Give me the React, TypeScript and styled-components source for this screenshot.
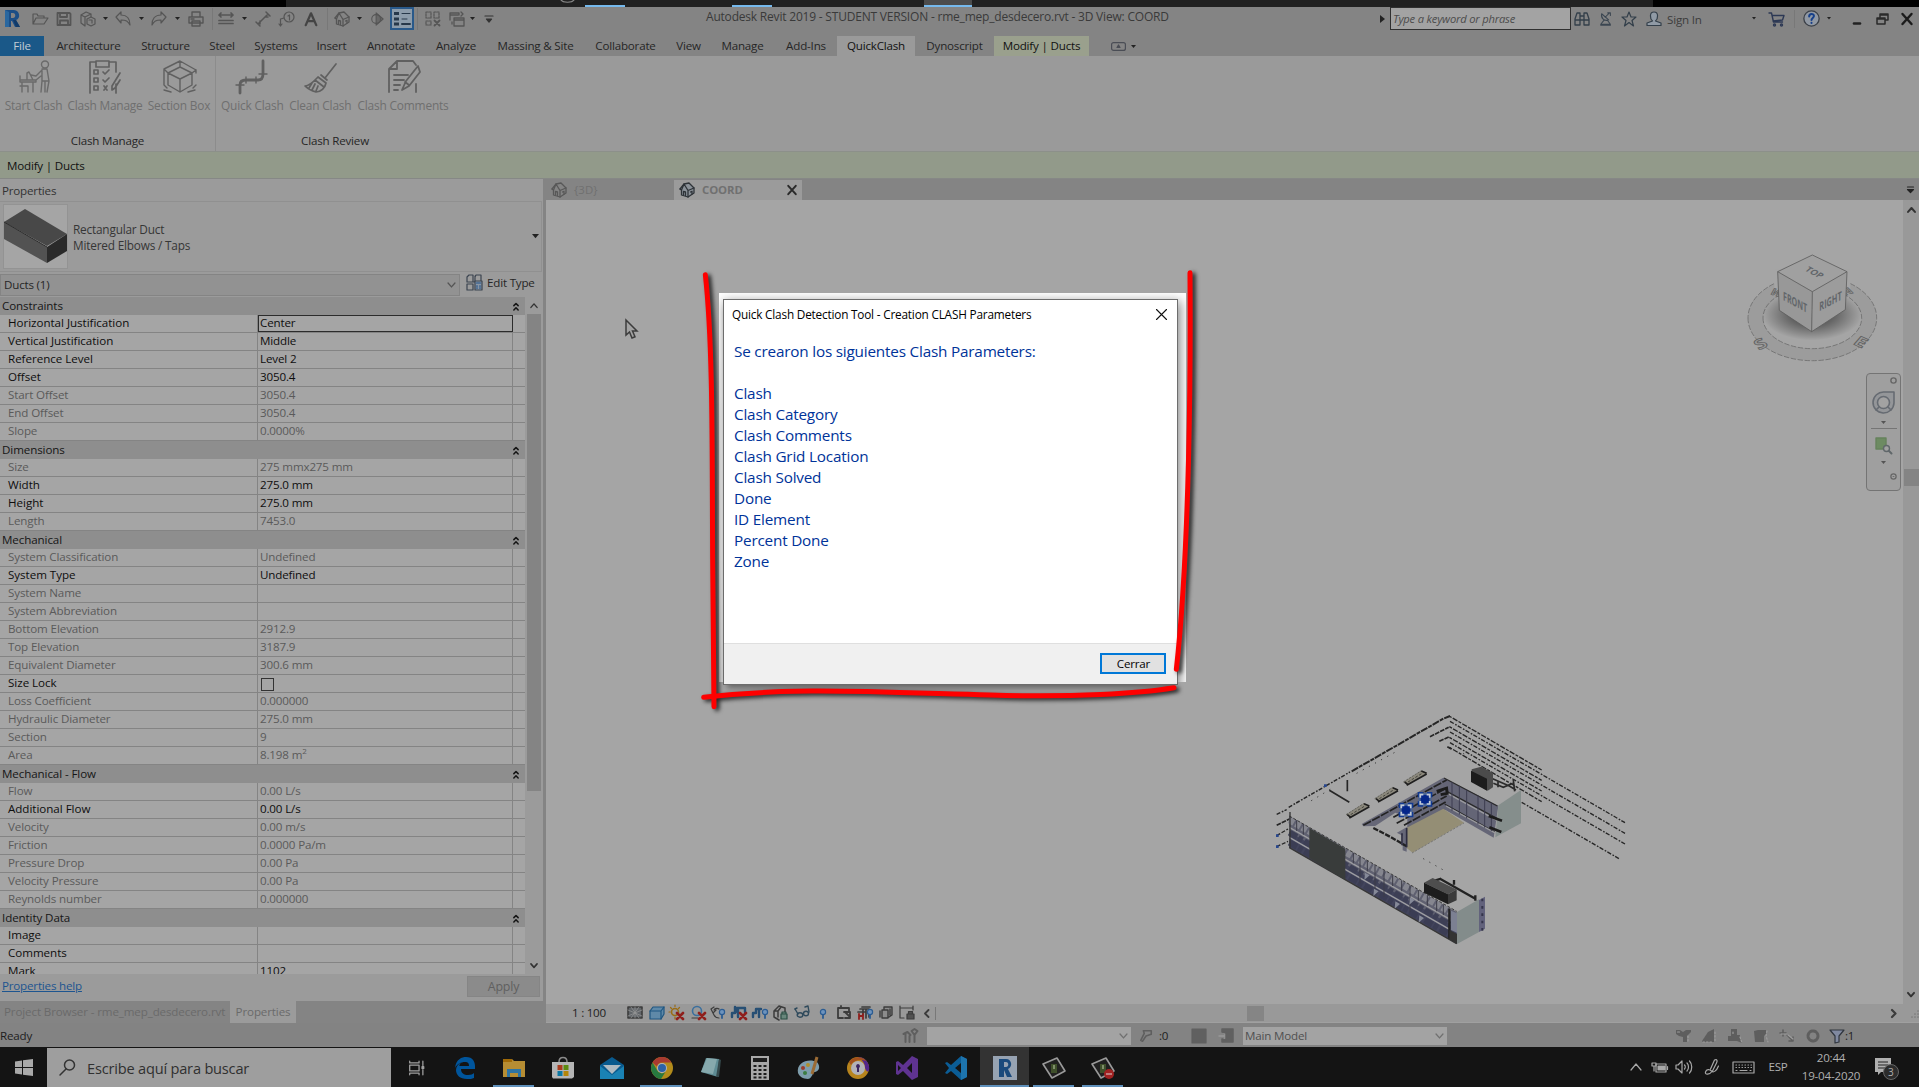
import React from 'react';
import styled, { createGlobalStyle, css } from 'styled-components';

const Global = createGlobalStyle`
  * { box-sizing: border-box; }
  html, body { margin: 0; padding: 0; background: #000; }
  body { overflow: hidden; font-family: "Open Sans", "Noto Sans", sans-serif; }
  svg { display: block; flex: none; overflow: visible; }
`;

const ink = '#3c3c3c';

/* ---------- shell ---------- */
const Screen = styled.div`
  position: relative;
  width: 1919px;
  height: 1087px;
  display: flex;
  flex-direction: column;
  font-size: 11.6px;
  letter-spacing: -0.19px;
  line-height: 16px;
  color: #262626;
  background: #848484;
  overflow: hidden;
  white-space: nowrap;
`;
const TopStrip = styled.div`
  height: 7px;
  flex: none;
  display: flex;
  background: #000;
`;
const StripPart = styled.div<{ $w: number; $bg?: string }>`
  width: ${p => p.$w}px;
  height: 7px;
  background: ${p => p.$bg || 'transparent'};
`;
const StripMark = styled.div<{ $w: number; $lit?: boolean }>`
  width: ${p => p.$w}px;
  height: 7px;
  background: ${p => (p.$lit ? '#4c4c4c' : '#212121')};
  border-bottom: 2px solid #76b9ed;
`;

/* ---------- title bar ---------- */
const TitleBar = styled.div`
  height: 29px;
  flex: none;
  display: flex;
  align-items: center;
  padding: 0 6px 6px 4px;
`;
const Slot = styled.div<{ $ml?: number; $w: number }>`
  width: ${p => p.$w}px;
  margin-left: ${p => p.$ml || 0}px;
  flex: none;
  display: flex;
  align-items: center;
  justify-content: center;
`;
const Sep = styled.div<{ $ml?: number; $h?: number }>`
  width: 1px;
  height: ${p => p.$h || 22}px;
  margin-left: ${p => p.$ml || 0}px;
  background: #787878;
`;
const ThinLines = styled.div`
  width: 24px;
  height: 23px;
  margin-left: 6px;
  display: flex;
  align-items: center;
  justify-content: center;
  background: #8c9cab;
  border: 2px solid #29598a;
`;
const WindowTitle = styled.div`
  margin-left: 213px;
  width: 470px;
  font-size: 12px;
  letter-spacing: -0.2px;
  color: #3a3a3a;
  margin-top: -4px;
`;
const RightTools = styled.div`
  margin-left: auto;
  display: flex;
  align-items: center;
`;
const SearchField = styled.div`
  width: 181px;
  height: 23px;
  margin-left: 5px;
  padding: 0 2px;
  display: flex;
  align-items: center;
  background: #a3a3a3;
  border: 1.5px solid #303030;
  font-style: italic;
  font-size: 11.2px;
  letter-spacing: -0.2px;
  color: #4c4c4c;
`;
const SignIn = styled.div`
  width: 36px;
  margin-left: 5px;
  margin-top: 2px;
  color: #3c3c3c;
`;

/* ---------- ribbon ---------- */
const Tabs = styled.div`
  height: 20px;
  flex: none;
  display: flex;
`;
const Tab = styled.div<{ $w: number; $kind?: 'file' | 'active' | 'context'; $ml?: number }>`
  width: ${p => p.$w}px;
  margin-left: ${p => p.$ml || 0}px;
  display: flex;
  align-items: center;
  justify-content: center;
  color: #262626;
  ${p => p.$kind === 'file' && css`background: #1a5888; color: #c3ccd4;`}
  ${p => p.$kind === 'active' && css`background: #9a9a9a; color: #111;`}
  ${p => p.$kind === 'context' && css`background: #9aa08d; color: #111;`}
`;
const Ribbon = styled.div`
  height: 95px;
  flex: none;
  display: flex;
  background: #9a9a9a;
`;
const RibbonPanel = styled.div<{ $w: number; $line?: boolean }>`
  width: ${p => p.$w}px;
  display: flex;
  flex-direction: column;
  justify-content: space-between;
  padding: 4px 5px 2px;
  ${p => p.$line && css`border-right: 1px solid #8c8c8c;`}
`;
const Commands = styled.div`
  display: flex;
  justify-content: flex-start;
`;
const Command = styled.div<{ $w: number }>`
  width: ${p => p.$w}px;
  display: flex;
  flex-direction: column;
  align-items: center;
  gap: 4px;
  color: #6f6f6f;
  font-size: 11.9px;
`;
const PanelTitle = styled.div`
  text-align: center;
  color: #262626;
`;
const ContextBar = styled.div`
  height: 28px;
  flex: none;
  display: flex;
  align-items: center;
  padding: 1px 7px 0;
  background: #929a8a;
  border-top: 1px solid #8c908a;
  border-bottom: 1px solid #868886;
  color: #111;
`;

/* ---------- main split ---------- */
const Main = styled.div`
  height: 844px;
  flex: none;
  display: flex;
`;
const Side = styled.div`
  width: 543px;
  display: flex;
  flex-direction: column;
`;
const SideBody = styled.div`
  height: 822px;
  background: #9b9b9b;
  display: flex;
  flex-direction: column;
`;
const SideTitle = styled.div`
  height: 22px;
  padding: 4px 2px 2px;
  color: #333;
`;
const TypeSelector = styled.div`
  height: 71px;
  width: 542px;
  display: flex;
  align-items: center;
  padding: 0 2px 0 3px;
  border: 1px solid #909090;
  border-left: 0;
`;
const Thumb = styled.div`
  width: 65px;
  height: 65px;
  background: #a5a5a5;
  border: 1px solid #939393;
`;
const TypeNames = styled.div`
  margin-left: 5px;
  padding-top: 1px;
  flex: 1;
  font-size: 11.8px;
  line-height: 16px;
  color: #363636;
`;
const FilterRow = styled.div`
  height: 25px;
  display: flex;
  align-items: center;
`;
const FilterCombo = styled.div`
  width: 460px;
  height: 22px;
  padding: 0 3px;
  display: flex;
  align-items: center;
  justify-content: space-between;
  background: #929292;
  border: 1px solid #848484;
`;
const EditType = styled.div`
  display: flex;
  align-items: center;
  gap: 4px;
  padding-left: 6px;
  padding-bottom: 4px;
`;
const GridArea = styled.div`
  height: 677px;
  display: flex;
`;
const PropGrid = styled.div`
  width: 525px;
  height: 677px;
  overflow: hidden;
`;
const Group = styled.div`
  height: 18px;
  display: flex;
  align-items: center;
  justify-content: space-between;
  padding: 0 6px 0 2px;
  background: #8e8e8e;
  color: #161616;
  letter-spacing: -0.1px;
`;
const PropRow = styled.div<{ $dim?: boolean }>`
  height: 18px;
  display: grid;
  grid-template-columns: 258px 255px 12px;
  background: #a5a5a5;
  border-bottom: 1px solid #848484;
  color: ${p => (p.$dim ? '#5a5a5a' : '#0e0e0e')};
  letter-spacing: ${p => (p.$dim ? '-0.12px' : '-0.03px')};
`;
const PropName = styled.div`
  padding-left: 8px;
  line-height: 16px;
  border-right: 1px solid #848484;
`;
const PropValue = styled.div<{ $focus?: boolean }>`
  padding-left: 2px;
  line-height: 16px;
  letter-spacing: -0.15px;
  border-right: 1px solid #848484;
  sup { font-size: 8px; line-height: 0; vertical-align: 5px; }
  ${p => p.$focus && css`outline: 1.5px solid #2c2c2c; outline-offset: -1px;`}
`;
const CheckBox = styled.div`
  width: 13px;
  height: 13px;
  margin: 3px 0 0 1px;
  border: 1px solid #333;
`;
const SideScroll = styled.div`
  width: 16px;
  margin-left: 1px;
  display: flex;
  flex-direction: column;
  align-items: center;
`;
const SideScrollThumb = styled.div`
  width: 14px;
  height: 477px;
  background: #848484;
`;
const ArrowBox = styled.div<{ $h: number; $mt?: number }>`
  height: ${p => p.$h}px;
  margin-top: ${p => p.$mt || 0}px;
  display: flex;
  align-items: center;
  justify-content: center;
`;
const SideFooter = styled.div`
  height: 27px;
  display: flex;
  justify-content: space-between;
  padding: 2px 3px 0 2px;
`;
const HelpLink = styled.div`
  margin-top: 2px;
  color: #1d5590;
  text-decoration: underline;
`;
const ApplyButton = styled.div`
  width: 73px;
  height: 21px;
  display: flex;
  align-items: center;
  justify-content: center;
  background: #8b8b8b;
  border: 1px solid #858585;
  color: #606060;
  font-size: 12.4px;
`;
const SideTabs = styled.div`
  height: 22px;
  display: flex;
`;
const SideTab = styled.div<{ $w: number; $active?: boolean }>`
  width: ${p => p.$w}px;
  display: flex;
  align-items: center;
  justify-content: ${p => (p.$active ? 'center' : 'flex-start')};
  padding-left: ${p => (p.$active ? 0 : 4)}px;
  letter-spacing: -0.13px;
  color: #6a6a6a;
  background: ${p => (p.$active ? '#9b9b9b' : 'transparent')};
`;

/* ---------- view ---------- */
const View = styled.div`
  flex: 1;
  margin-left: 3px;
  display: flex;
  flex-direction: column;
`;
const ViewTabs = styled.div`
  height: 21px;
  display: flex;
  padding-top: 1px;
`;
const ViewTab = styled.div<{ $w: number; $active?: boolean }>`
  width: ${p => p.$w}px;
  display: flex;
  align-items: center;
  padding-left: 5px;
  color: #707070;
  font-size: 11.4px;
  background: ${p => (p.$active ? '#9b9b9b' : 'transparent')};
  span { margin-left: 7px; flex: 1; font-weight: ${p => (p.$active ? 700 : 400)}; letter-spacing: ${p => (p.$active ? -0.1 : 0.1)}px; }
  svg:last-child { margin-right: ${p => (p.$active ? 5 : 0)}px; }
`;
const TabMenu = styled.div`
  margin-left: auto;
  width: 17px;
  display: flex;
  align-items: center;
  justify-content: center;
`;
const ViewBody = styled.div`
  height: 804px;
  display: flex;
`;
const Canvas = styled.div`
  position: relative;
  flex: 1;
  background: #a5a5a5;
`;
const Placed = styled.div<{ $x: number; $y: number }>`
  position: absolute;
  left: ${p => p.$x}px;
  top: ${p => p.$y}px;
`;
const NavBar = styled.div`
  position: absolute;
  right: 2px;
  top: 173px;
  width: 35px;
  height: 118px;
  padding: 3px;
  display: flex;
  flex-direction: column;
  align-items: center;
  background: #9f9f9f;
  border: 1.5px solid #747474;
  border-radius: 4px;
`;
const NavLine = styled.div`
  width: 26px;
  height: 1px;
  background: #757575;
`;
const VScroll = styled.div`
  width: 16px;
  display: flex;
  flex-direction: column;
  align-items: center;
  background: #999;
`;
const VThumb = styled.div`
  width: 15px;
  height: 17px;
  margin-top: 250px;
  background: #848484;
`;
const ViewControls = styled.div`
  height: 19px;
  display: flex;
  align-items: center;
  background: #999;
  border-bottom: 1px solid #a0a0a0;
  color: #222;
`;
const Scale = styled.div`
  width: 78px;
  padding-left: 26px;
  letter-spacing: -0.25px;
`;
const HThumb = styled.div`
  width: 17px;
  height: 15px;
  margin-left: 311px;
  background: #858585;
`;

/* ---------- status bar ---------- */
const StatusBar = styled.div`
  height: 24px;
  flex: none;
  display: flex;
  align-items: center;
  padding-top: 1px;
  background: #838383;
  color: #1e1e1e;
`;
const Combo = styled.div<{ $w: number; $ml: number }>`
  width: ${p => p.$w}px;
  height: 18px;
  margin-left: ${p => p.$ml}px;
  padding: 0 3px 0 2px;
  display: flex;
  align-items: center;
  justify-content: space-between;
  background: #a3a3a3;
  color: #505050;
`;
const StatusText = styled.div<{ $w: number; $ml?: number }>`
  width: ${p => p.$w}px;
  margin-left: ${p => p.$ml || 0}px;
`;

/* ---------- taskbar ---------- */
const Taskbar = styled.div`
  height: 40px;
  flex: none;
  display: flex;
  background: #141414;
`;
const StartButton = styled.div`
  width: 47px;
  display: flex;
  align-items: center;
  justify-content: center;
`;
const TaskSearch = styled.div`
  width: 344px;
  height: 39px;
  margin-top: 1px;
  padding-left: 12px;
  display: flex;
  align-items: center;
  gap: 11px;
  background: #9e9e9e;
  color: #303030;
  font-size: 14.6px;
  letter-spacing: -0.2px;
`;
const TaskItem = styled.div<{ $run?: boolean; $active?: boolean }>`
  width: 49.1px;
  height: 40px;
  padding: 2px 0 0 1px;
  position: relative;
  display: flex;
  align-items: center;
  justify-content: center;
  background: ${p => (p.$active ? '#333' : 'transparent')};
  ${p => p.$run && css`
    &::after {
      content: '';
      position: absolute;
      left: ${p.$active ? 0 : 4}px;
      right: ${p.$active ? 0 : 4}px;
      bottom: 0;
      height: 2px;
      background: #5f90bb;
    }
  `}
`;
const Tray = styled.div`
  margin-left: auto;
  display: flex;
  align-items: center;
  padding-right: 20px;
  color: #b0b0b0;
`;
const TrayText = styled.div<{ $w: number; $ml: number }>`
  width: ${p => p.$w}px;
  margin-left: ${p => p.$ml}px;
  text-align: center;
  line-height: 18px;
`;

/* ---------- dialog ---------- */
const Halo = styled.div`
  position: absolute;
  left: 719px;
  top: 293px;
  width: 467px;
  height: 389px;
  background: #fff;
  overflow: hidden;
`;
const HaloShade = styled.div`
  position: absolute;
  left: 4px;
  top: 6px;
  width: 455px;
  height: 386px;
  box-shadow: 2px 3px 10px 1px rgba(0, 0, 0, 0.42);
`;
const Dialog = styled.div`
  position: absolute;
  left: 723px;
  top: 299px;
  width: 455px;
  height: 386px;
  display: flex;
  flex-direction: column;
  background: #fff;
  border: 1px solid #6d6d6d;
  box-shadow: 0 7px 6px -4px rgba(0, 0, 0, 0.4);
`;
const DialogTitle = styled.div`
  height: 30px;
  padding: 0 10px 2px 8px;
  display: flex;
  align-items: center;
  justify-content: space-between;
  color: #000;
  font-size: 11.8px;
  letter-spacing: -0.2px;
`;
const DialogBody = styled.div`
  flex: 1;
  padding: 11px 10px;
  font-size: 15.3px;
  letter-spacing: -0.2px;
  line-height: 21px;
  color: #003399;
`;
const BodyLine = styled.div`
  height: 21px;
`;
const DialogFooter = styled.div`
  height: 41px;
  padding: 9px 11px 0 0;
  display: flex;
  justify-content: flex-end;
  background: #f0f0f0;
  border-top: 1px solid #dfdfdf;
`;
const CloseButton = styled.div`
  width: 66px;
  height: 21px;
  padding-left: 1px;
  display: flex;
  align-items: center;
  justify-content: center;
  background: #e1e1e1;
  border: 2px solid #0078d7;
  color: #000;
`;
const Marker = styled.svg`
  position: absolute;
  left: 690px;
  top: 260px;
  filter: drop-shadow(3px 2px 2px rgba(0, 0, 0, 0.8));
`;

/* ---------- icons ---------- */
type IcoProps = { w?: number; h?: number; vb?: string; c?: string; sw?: number; children: React.ReactNode };
const Ico = ({ w = 16, h = 16, vb = '0 0 16 16', c = ink, sw = 1.2, children }: IcoProps) => (
  <svg width={w} height={h} viewBox={vb} fill="none" stroke={c} strokeWidth={sw} strokeLinejoin="round" strokeLinecap="round">
    {children}
  </svg>
);
const Down = ({ w = 5, c = '#222' }: { w?: number; c?: string }) => (
  <svg width={w} height={w * 0.6} viewBox="0 0 10 6"><path d="M0 0h10L5 6z" fill={c} /></svg>
);
const Chevron = ({ up = false, c = '#333', sw = 1.3, w = 9 }) => (
  <Ico w={w} h={w * 0.66} vb="0 0 9 6" c={c} sw={sw}><path d={up ? 'M1 5l3.5-4L8 5' : 'M1 1l3.5 4L8 1'} /></Ico>
);
const Collapse = () => (
  <Ico w={6} h={9} vb="0 0 7 10" c="#151515" sw={1.8}><path d="M1 4l2.5-2.500L6 4M1 9l2.500-2.500L6 9" /></Ico>
);
const Cross = ({ w = 12, sw = 2.4, c = '#2a2a2a' }) => (
  <Ico w={w} h={w} vb="0 0 12 12" sw={sw} c={c}><path d="M1.5 1l9 10M10.5 1l-9 10" /></Ico>
);
const House = ({ c = ink, fill = 'none' }) => (
  <Ico c={c} sw={1.3}>
    <path d="M1 7l4-5 5-1 5 5v5l-6 4-6.500-2V8z" fill={fill} />
    <path d="M5 2l4 6.500L15 6M5 2L2.500 8l-1.500-1M9 8.500V15M4.500 13V9.500l2 .5v3.500M11.500 10l1.500-.7V12" />
  </Ico>
);
const RevitR = ({ w = 17, h = 19 }) => (
  <svg width={w} height={h} viewBox="0 0 17 19">
    <path fillRule="evenodd" d="M1 1h9c6 0 7 9 2 10l4 7h-5L8 12H7v6H1zM7 4v5h2c3 0 3-5 0-5z" fill="#1c4e86" />
    <path d="M1 1l4 2v15H1z" fill="#2a679f" /><path d="M9 11l3 0 4 7h-4z" fill="#123a68" />
  </svg>
);
const G = '#555';

const QuickAccess = () => (
  <>
    <Slot $w={16}><RevitR /></Slot>
    <Slot $ml={11} $w={18}><Ico w={18} c={G}><path d="M1 13V3h4l1 2h6v2M1 13l3-6h12l-4 6z" /></Ico></Slot>
    <Slot $ml={7} $w={16}><Ico c={G} sw={1.8}><path d="M1.500 2h12l1 1v11h-13zM4 2v4h7V2M4 14V9.500h8V14" /></Ico></Slot>
    <Slot $ml={8} $w={16}><Ico c={G}><path d="M1 4l5-3 5 2v3M1 4v8l4 3M1 4l4 2v9M5 6l6-3" /><path d="M7 8l4-2 4 2v5l-4 2-4-2zM9 9h3v3" /></Ico></Slot>
    <Slot $ml={5} $w={8}><Down /></Slot>
    <Slot $ml={6} $w={16}><Ico c={G}><path d="M1 6l5-5v3c6 0 9 4 9 10-2-4-4-5-9-5v3z" /></Ico></Slot>
    <Slot $ml={6} $w={8}><Down /></Slot>
    <Slot $ml={6} $w={16}><Ico c={G}><path d="M15 6l-5-5v3c-6 0-9 4-9 10 2-4 4-5 9-5v3z" /></Ico></Slot>
    <Slot $ml={6} $w={8}><Down /></Slot>
    <Slot $ml={6} $w={18}><Ico w={18} c={G} sw={1.400}><path d="M4 6V1h8v5M1 6h14v6H1zM4 10h8v5H4zM3 8h3" /></Ico></Slot>
    <Sep $ml={7} />
    <Slot $ml={4} $w={18}><Ico w={18} c={G} sw={1.700}><path d="M1 4h14M3 2L1 4l2 2M13 2l2 2-2 2M1 9.500h14M1 12.500h14" /></Ico></Slot>
    <Slot $ml={5} $w={8}><Down /></Slot>
    <Slot $ml={7} $w={16}><Ico c={G} sw={1.5}><path d="M3 13L13 3M1 11l4 4M11 1l4 4M5 13v-3M11 6h2" /></Ico></Slot>
    <Slot $ml={8} $w={16}><Ico c={G}><circle cx="10" cy="6" r="5" /><path d="M9 5l1.500-1v5M5 7L1.500 8v6M0 13l1.500 2L3 13" /></Ico></Slot>
    <Slot $ml={9} $w={14}><Ico w={14} c="#444" sw={2.600}><path d="M2 15L8 1.500 14 15M4.500 10.500h7" /></Ico></Slot>
    <Sep $ml={9} />
    <Slot $ml={6} $w={16}><House c={G} /></Slot>
    <Slot $ml={5} $w={8}><Down /></Slot>
    <Slot $ml={7} $w={14}><Ico w={14} c={G}><circle cx="7" cy="8" r="5" /><path d="M7 1l8 7-8 7z" fill={G} fillOpacity=".6" /></Ico></Slot>
    <ThinLines>
      <Ico w={18} h={16} vb="0 0 18 16" c="#27384a" sw={1}>
        <path d="M1 2.500h5M1 8h5M1 13h5" strokeWidth="3" strokeLinecap="butt" /><path d="M9 2.500h8M9 8h5" /><path d="M9 13h8" strokeWidth="2" />
      </Ico>
    </ThinLines>
    <Sep $ml={3} />
    <Slot $ml={7} $w={16}><Ico c={G}><path d="M1 1h5v6H1zM9 1h5v6H9zM1 10h5v4H1z" strokeDasharray="2 1" /><path d="M9.500 9.500l5 5M14.500 9.500l-5 5" strokeWidth="1.800" /></Ico></Slot>
    <Slot $ml={7} $w={18}><Ico w={18} c={G} sw={1.300}><path d="M1 9V2h9v2M1 4h8M5 7h10v8H5zM5 9h10M12 1l2 2-2 2M3 11v2" /></Ico></Slot>
    <Slot $ml={2} $w={8}><Down /></Slot>
    <Slot $ml={8} $w={9}><Ico w={8} h={8} vb="0 0 8 8" c="#333"><path d="M0 1h8" /><path d="M1.500 4h5L4 7z" fill="#333" /></Ico></Slot>
  </>
);

const RightBar = () => (
  <RightTools>
    <svg width="5" height="8" viewBox="0 0 5 8"><path d="M0 0l5 4-5 4z" fill="#222" /></svg>
    <SearchField>Type a keyword or phrase</SearchField>
    <Slot $ml={3} $w={16}><Ico c="#333f4a" sw={1.300}><path d="M1 8l2-6h3v12H1zM15 8l-2-6h-3v12h5zM6 5h4M6 9h4M1 9h5M10 9h5" /></Ico></Slot>
    <Slot $ml={9} $w={14}><Ico w={14} c="#3b4651"><path d="M3 2c-1 5 3 9 8 7zM7 6l5-5M10 1h3v3M6 9l-4 5h11l-3-4M2 15h11" /></Ico></Slot>
    <Slot $ml={8} $w={16}><Ico c="#333f4a"><path d="M8 1l2 5h5l-4 3.500 1.500 5.500L8 11.500 3.500 15 5 9.500 1 6h5z" /></Ico></Slot>
    <Slot $ml={9} $w={16}><Ico c="#333f4a"><path d="M8 1c5 0 4 7 1.500 9l5.500 2v2.500H1V12l5.500-2C4 8 3 1 8 1z" fill="#909aa5" /></Ico></Slot>
    <SignIn>Sign In</SignIn>
    <Slot $ml={48} $w={6}><Down w={4} /></Slot>
    <Slot $ml={11} $w={17}><Ico w={17} c="#2c3854" sw={1.400}><path d="M0.500 2h2.500l2 9h9M3.500 4.500h12l-1.500 4.500-9.500 1" /><circle cx="6" cy="14" r="1" /><circle cx="13" cy="14" r="1" /></Ico></Slot>
    <Sep $ml={9} $h={18} />
    <Slot $ml={8} $w={17}><Ico w={17} h={17} c="#3a3f47"><circle cx="8" cy="8" r="7.200" fill="#9098a3" /><path d="M5.800 6c0-3 4.600-3 4.500-.300C10.200 7.500 8 7.500 8 9.500M8 12v.200" stroke="#17408a" strokeWidth="1.900" /></Ico></Slot>
    <Slot $ml={6} $w={6}><Down w={4} /></Slot>
    <Slot $ml={21} $w={8}><Ico w={8} h={12} vb="0 0 8 12" sw={2.600} c="#222"><path d="M1 10.500h6" /></Ico></Slot>
    <Slot $ml={15} $w={13}><Ico w={13} h={12} vb="0 0 13 12" sw={1.500} c="#2a2a2a"><path d="M4 4V1h8v6H9M1 5h8v6H1zM1 6h8M4 2h8" /></Ico></Slot>
    <Slot $ml={12} $w={12}><Cross c="#1c1c1c" /></Slot>
  </RightTools>
);

const R = '#606060';
const ribbonIcons: Record<string, React.ReactNode> = {
  start: <Ico w={33} h={33} vb="-2 0 33 33" c="#6a6a6a" sw={1.400}><circle cx="26" cy="4.500" r="3.500" /><path d="M23 10l-6 6-5-1M23 9h5l2 12-2 11M23 11v10l-1 11M26 21v11M1 20h16v2H1zM3 22v10M14 22v10M8 20v-7l2-1 4 8M22 16l-5 4M24 21h5M1 26h8v6M1 16v4" /></Ico>,
  manage: <Ico w={33} h={33} vb="2 0 33 33" c={R} sw={1.700}><path d="M9 2H3v31M29 2h-6M29 2v10M29 24v9M9 1h13v6H9zM7 10h4v4H7zM7 18h4v4H7zM7 26h4v4H7zM16 12l2 2 4-4M16 20l2 2 4-4M17 26l3 4M20 26l-3 4M33 13l-8 13 0 4 3-2 5-8" /></Ico>,
  section: <Ico w={33} h={33} vb="0 0 33 33" c={R} sw={1.400}><path d="M1 9v16M1 9L17 1l16 9M33 10v3M1 25l3 3M33 25l-3 3M1 30l7 2M32 30l-7 2M17 7l12 6v12l-12 7L5 25V13zM5 13l12 6 12-6M17 19v13M17 1v6M1 9l4 4M33 10l-4 3" /></Ico>,
  quick: <Ico w={33} h={33} vb="0 0 33 33" c={R} sw={2.800}><path d="M27 1v13c0 4-2 6-5 6H10c-4 0-6 2-6 5v8" /><path d="M23 14h8M0 25h8M10 17v6M20 17v6" strokeWidth="1.400" /></Ico>,
  clean: <Ico w={33} h={33} vb="0 0 33 33" c={R} sw={1.700}><path d="M32 4L21 18M14 17l8 6c-1 5-5 9-10 9C8 31 4 29 1 26c5 0 9-5 13-9zM11 20l9 7M8 23l-3 5M11 24l-3 6M14 26l-2 5M17 15l6 5" /></Ico>,
  comments: <Ico w={33} h={33} vb="0 0 33 33" c={R} sw={1.800}><path d="M2 32V9l8-8h16l3 4M2 9h8V1M29 24v8M7 15h14M7 20h10M7 25h6M7 30h4M31 6L19 21l-4 9 7-4L33 12zM18 22l4 3" /></Ico>,
};

const commands1: [string, string, number][] = [['start', 'Start Clash', 57], ['manage', 'Clash Manage', 86], ['section', 'Section Box', 62]];
const commands2: [string, string, number][] = [['quick', 'Quick Clash', 64], ['clean', 'Clean Clash', 75], ['comments', 'Clash Comments', 94]];

const tabs: { t: string; w: number; kind?: 'file' | 'active' | 'context'; ml?: number }[] = [
  { t: 'File', w: 44, kind: 'file' }, { t: 'Architecture', w: 89 }, { t: 'Structure', w: 65 }, { t: 'Steel', w: 48 },
  { t: 'Systems', w: 60 }, { t: 'Insert', w: 51 }, { t: 'Annotate', w: 68 }, { t: 'Analyze', w: 62 },
  { t: 'Massing & Site', w: 97 }, { t: 'Collaborate', w: 83 }, { t: 'View', w: 43 }, { t: 'Manage', w: 65 },
  { t: 'Add-Ins', w: 62 }, { t: 'QuickClash', w: 78, kind: 'active' }, { t: 'Dynoscript', w: 79 }, { t: 'Modify | Ducts', w: 95, kind: 'context' },
];

type Prop = [string, React.ReactNode, boolean?];
const groups: { name: string; rows: Prop[] }[] = [
  { name: 'Constraints', rows: [['Horizontal Justification', 'Center'], ['Vertical Justification', 'Middle'], ['Reference Level', 'Level 2'], ['Offset', '3050.4'], ['Start Offset', '3050.4', true], ['End Offset', '3050.4', true], ['Slope', '0.0000%', true]] },
  { name: 'Dimensions', rows: [['Size', '275 mmx275 mm', true], ['Width', '275.0 mm'], ['Height', '275.0 mm'], ['Length', '7453.0', true]] },
  { name: 'Mechanical', rows: [['System Classification', 'Undefined', true], ['System Type', 'Undefined'], ['System Name', '', true], ['System Abbreviation', '', true], ['Bottom Elevation', '2912.9', true], ['Top Elevation', '3187.9', true], ['Equivalent Diameter', '300.6 mm', true], ['Size Lock', <CheckBox key="c" />], ['Loss Coefficient', '0.000000', true], ['Hydraulic Diameter', '275.0 mm', true], ['Section', '9', true], ['Area', <>8.198 m<sup>2</sup></>, true]] },
  { name: 'Mechanical - Flow', rows: [['Flow', '0.00 L/s', true], ['Additional Flow', '0.00 L/s'], ['Velocity', '0.00 m/s', true], ['Friction', '0.0000 Pa/m', true], ['Pressure Drop', '0.00 Pa', true], ['Velocity Pressure', '0.00 Pa', true], ['Reynolds number', '0.000000', true]] },
  { name: 'Identity Data', rows: [['Image', ''], ['Comments', ''], ['Mark', '1102']] },
];

/* ---------- canvas drawings ---------- */
const Unit = ({ x, y, w, s }: { x: number; y: number; w: number; s: number }) => (
  <g transform={`translate(${x} ${y})`}>
    <path d={`M0 14L26 0l${w} ${w * s}-26 14z`} fill="#4e4e4e" />
    <path d={`M0 14l${w} ${w * s}v30L0 44z`} fill="#1d1d1d" />
    <path d={`M${w} ${14 + w * s}l26-14v32l-26 12z`} fill="#3a3a3a" />
  </g>
);
const Strip = ({ x, y }: { x: number; y: number }) => (
  <g transform={`translate(${x} ${y})`}>
    <path d="M0 36L54 2l18 8L14 46z" fill="#8b887c" />
    <path d="M0 36L54 2" stroke="#4a4a44" strokeWidth="2" strokeDasharray="7 3" />
    <path d="M10 46L70 12M54 3l16 7M4 36l10 8" stroke="#1f1f1f" strokeWidth="5" />
    <path d="M14 36L58 9" stroke="#44443e" strokeWidth="3" strokeDasharray="8 5" />
  </g>
);
const Selected = ({ x, y }: { x: number; y: number }) => (
  <g transform={`translate(${x} ${y})`}>
    <path d="M-20-20h40v40h-40z" fill="#4a6494" />
    <path d="M-13-13h26v26h-26z" fill="#04268a" />
    <path d="M-20-6v-14h14M20-6v-14H6M-20 6v14h14M20 6v14H6" fill="none" stroke="#123a92" strokeWidth="4" />
    <path d="M-14-5v-9h9M14-5v-9H5M-14 5v9h9M14 5v9H5" fill="none" stroke="#c1cad8" strokeWidth="5" />
  </g>
);
const far: [number, number, number, number][] = [
  [597, 48, 875, 210], [600, 64, 1125, 368], [598, 80, 875, 241], [600, 96, 1125, 400],
  [598, 112, 875, 273], [600, 128, 1125, 432], [598, 142, 875, 305], [815, 307, 1107, 476],
];
const Building = () => (
  <svg width="400" height="260" viewBox="0 0 1200 780" fill="none">
    <g stroke="#262626" strokeWidth="4">
      {far.map((l, i) => <path key={i} d={`M${l[0]} ${l[1]}L${l[2]} ${l[3]}`} strokeDasharray={i % 2 ? '13 5 5 4' : '9 4 16 4'} />)}
      <path d="M305 214L580 56l20-8" strokeWidth="6" strokeDasharray="22 3 12 3" />
      <path d="M80 343l30-14M116 322L300 216" strokeWidth="4.500" strokeDasharray="12 5 5 4" />
      <path d="M80 376l40-20M540 110l56-28M568 124l30-14M592 140l14 8" strokeWidth="5" strokeDasharray="14 3" />
      <path d="M80 407l34-20M80 440l34-16" strokeWidth="4" strokeDasharray="12 5" />
      <path d="M320 220l120-66M184 302l60-36M520 476l60 34M640 160l10 6" strokeWidth="3" strokeDasharray="3 18" />
      <path d="M292 240v34M238 271l60 36" strokeWidth="5" />
    </g>
    <path d="M78 407h8M78 440h8M222 257h8" stroke="#27478f" strokeWidth="8" />
    {/* long facade */}
    <path d="M118 348L620 636v96L118 443z" fill="#5f6070" />
    <path d="M118 396L620 684v46L118 443z" fill="#42445c" />
    <g strokeDasharray="26 5 14 7">
      <path d="M118 398L600 674" stroke="#3d3f55" strokeWidth="18" />
      <path d="M118 428L610 710" stroke="#3b3d54" strokeWidth="18" />
    </g>
    <path d="M118 360L600 636" stroke="#85868f" strokeWidth="20" strokeDasharray="16 6" />
    <path d="M118 382L600 658M118 412L600 689" stroke="#9d9da1" strokeWidth="4" />
    <path d="M118 348L620 634" stroke="#3a3a3a" strokeWidth="3" strokeDasharray="9 5" />
    <path d="M118 443L620 731" stroke="#383838" strokeWidth="4" />
    {[140, 160, 310, 330, 352, 375, 402, 428, 455, 480, 505, 532, 560, 580].map(x => {
      const y = 348 + (x - 118) * 0.574;
      return <path key={x} d={`M${x} ${y}v${x % 3 ? 32 : 80}`} stroke="#3c3c48" strokeWidth="3" />;
    })}
    {[[372, 566], [436, 604], [508, 646], [345, 518], [480, 592]].map(([x, y]) => <path key={x} d={`M${x} ${y}l14 8-16 14z`} fill="#858998" />)}
    <path d="M120 336v108" stroke="#333" strokeWidth="4" />
    <path d="M178 384l108 62v94l-108-66z" fill="#393c3b" />
    <path d="M598 626v90" stroke="#222" strokeWidth="7" />
    <path d="M603 632l18 8v58l-18-8z" fill="#7c8092" /><path d="M598 690l23 12v30l-23-14z" fill="#333" />
    <path d="M621 636l66-38v98l-66 36z" fill="#838c8b" />
    <path d="M687 600l18-10v96l-18 10z" fill="#62627c" /><path d="M697 596v96" stroke="#34344a" strokeWidth="6" strokeDasharray="8 14" />
    {/* courtyard */}
    <path d="M335 372L580 233l12 8v86l-122 60v68l-12-4v-44l-60-30-58 2z" fill="#666777" />
    <path d="M370 382l66-44 36 14v28l-44 26z" fill="#a3a3a3" />
    <path d="M580 233l165 84-14 96-150-86z" fill="#646576" />
    <path d="M340 376L590 240M430 352l160-88M440 370l150-82M462 376l125-70" stroke="#222" strokeWidth="5" strokeDasharray="26 4" />
    <path d="M370 384l50 26 52 30" stroke="#222" strokeWidth="7" strokeDasharray="16 4" />
    <path d="M582 234l160 84M586 272l160 86M584 312l150 84" stroke="#2b2b2b" strokeWidth="4" />
    <path d="M588 278l158 86M588 318l150 82" stroke="#9a9a9e" strokeWidth="4" />
    {[606, 628, 650, 684, 704, 724].map(x => <path key={x} d={`M${x} ${246 + (x - 606) * 0.52}v86`} stroke="#3c3c50" strokeWidth="3" />)}
    <path d="M470 383l110-57 62 42-154 90-18-14z" fill="#948e75" />
    <path d="M470 384v58M456 400v36" stroke="#2c2c40" strokeWidth="5" />
    <path d="M486 459l156-90" stroke="#777" strokeWidth="3" strokeDasharray="6 5" />
    <path d="M745 316l68-46v100l-77 42z" fill="#858e8c" />
    <path d="M716 348l40 14M718 382l36 14M560 274l30-10 2 16-20 4" stroke="#1c1c1c" strokeWidth="8" />
    <path d="M728 236l50 22 20 12M730 250l30 12 28-12M744 244v18M790 240l4 34" stroke="#2b2b2b" strokeWidth="5" />
    <path d="M570 536l106 60M574 536l-20 6M612 540v14M676 586v16" stroke="#222" strokeWidth="7" />
    <path d="M665 208l28-8 36 18v44l-16 10-48-28z" fill="#4b4b4b" /><path d="M663 212l48 24v36l-48-26z" fill="#1c1c1c" />
    <Unit x={522} y={534} w={72} s={0.48} />
    <Strip x={288} y={308} /><Strip x={374} y={260} /><Strip x={460} y={210} />
    <Selected x={468} y={330} /><Selected x={525} y={298} />
  </svg>
);

const ViewCube = () => (
  <svg width="135" height="110" viewBox="140 220 405 330" fill="none">
    <defs>
      <radialGradient id="cubeShade"><stop offset="0" stopColor="#000" stopOpacity=".7" /><stop offset=".5" stopColor="#000" stopOpacity=".36" /><stop offset="1" stopColor="#000" stopOpacity="0" /></radialGradient>
    </defs>
    <path fillRule="evenodd" d="M143 415a193 128 0 1 0 386 0a193 128 0 1 0-386 0zM188 415a148 92 0 1 0 296 0a148 92 0 1 0-296 0z" fill="#9c9c9c" stroke="#6e6e6e" strokeWidth="2.500" strokeDasharray="16 5" />
    <path d="M222 330V270h228v60z" fill="#a5a5a5" />
    <ellipse cx="335" cy="404" rx="150" ry="78" fill="url(#cubeShade)" />
    <g fontFamily="Open Sans, sans-serif" fontWeight="700" fill="#999" stroke="#606060" strokeWidth="2.500">
      <text fontSize="50" transform="matrix(1.1 -.5 .6 .7 176 512)">S</text>
      <text fontSize="50" transform="matrix(1.1 .5 -.6 .7 456 492)">E</text>
      <text fontSize="38" transform="matrix(.9 .3 -.6 .6 206 342)">W</text>
      <text fontSize="38" transform="matrix(.9 -.3 .6 .6 434 348)">N</text>
    </g>
    <path d="M232 276l104-50 104 50-104 60z" fill="#a0a0a0" />
    <path d="M232 276l104 60-2 120-97-64z" fill="#989898" />
    <path d="M440 276l-104 60-2 120 101-66z" fill="#9c9c9c" />
    <path d="M232 276l104-50 104 50-104 60zM232 276l5 116 97 64 101-66 5-114M336 336l-2 120" stroke="#5d5d5d" strokeWidth="2.500" />
    <g fontFamily="Open Sans, sans-serif" fontWeight="700" fill="#62666a">
      <text fontSize="29" transform="matrix(.82 .44 -.7 .6 312 272)">TOP</text>
      <text fontSize="36" textLength="84" lengthAdjust="spacingAndGlyphs" transform="matrix(.86 .46 0 1 248 361)">FRONT</text>
      <text fontSize="36" textLength="78" lengthAdjust="spacingAndGlyphs" transform="matrix(.86 -.46 0 1 357 395)">RIGHT</text>
    </g>
  </svg>
);

const B = '#22435f';
const Bulb = ({ x = 12 }) => <g><circle cx={x} cy="7" r="2.600" fill="#6d93bd" stroke="#2b5c92" strokeWidth="1.200" /><path d={`M${x} 10.500v2.500`} stroke="#2b5c92" strokeWidth="1.800" /></g>;
const RedX = () => <path d="M9 8l6 6M15 8l-6 6" stroke="#8f1f1c" strokeWidth="2.600" />;
const controlIcons: React.ReactNode[] = [
  <g key="0"><path d="M1 2h14v11H1z" fill="#62666a" strokeWidth="1.600" /><path d="M1 5l14 6M1 11l14-6M4 2l8 11M12 2L4 13M8 2v11" strokeWidth=".7" stroke="#989898" /></g>,
  <g key="1" stroke="#1f5681"><path d="M1 6l3-4h11v7l-3 5H1z" fill="#5f89a8" /><path d="M1 6h11l3-4M12 6v8" /></g>,
  <g key="2"><circle cx="7" cy="7" r="3.500" stroke="#9a6d15" strokeWidth="1.600" /><path d="M7 0v1.500M7 12v2M1 7h1M2.500 2.500l1 1M11.500 2.500l-1 1" stroke="#9a6d15" /><RedX /></g>,
  <g key="3"><circle cx="7" cy="6" r="4.500" stroke="#3b6f9e" strokeWidth="1.600" /><path d="M2 13h6" /><RedX /></g>,
  <g key="4"><path d="M1 4l3 6c1 2 3 3 5 3M1 4l3-2M4 5c1-2 4-2 5-1M3 8l3-3" stroke={ink} /><Bulb /></g>,
  <g key="5"><path d="M1 12V8h3V2M4 3h10v4M7 4v8M4 8l3-4" stroke="#274f74" strokeWidth="2.400" /><RedX /></g>,
  <g key="6"><path d="M1 12V8h3V4h5M7 5v7" stroke="#274f74" strokeWidth="2.400" /><Bulb x={13} /></g>,
  <g key="7"><path d="M1 6l5-5 6 2v4M1 6v6l5 3M1 6h4v6M5 6l3-4" strokeWidth="1.500" /><path d="M8 9h6v5H8zM9 9V7h4v2" stroke="#2c4f45" fill="#68867b" /></g>,
  <g key="8" stroke="#2f4a5c" strokeWidth="1.400"><path d="M1 4l3 5M11 2l3-1 1 6" /><ellipse cx="6" cy="10" rx="2.800" ry="2.200" /><ellipse cx="12" cy="8.500" rx="2.500" ry="2.200" /><path d="M1 4l2-1" /></g>,
  <Bulb key="9" x={8} />,
  <g key="10" strokeWidth="1.800"><path d="M2 3h11v3M2 3v10h5M8 7h6v6H9M5 1v2M9 7l4 4" /></g>,
  <g key="11"><path d="M3 4h9v8M1 7h8v6M5 2h8M6 4v6M9 4v5" strokeWidth="1.700" /><path d="M2 9v5M6 9v5M2 11h4" stroke="#8f1f1c" strokeWidth="1.800" /><Bulb x={13} /></g>,
  <g key="12" strokeWidth="1.400"><path d="M4 5h6v8H4zM6 5V2h8v8l-3 2M2 6v6M12 4v6" fill="#777" fillOpacity=".4" /></g>,
  <g key="13"><path d="M1 3h13M1 1v12M14 1v4M1 13h4" /><path d="M8 9h7v5H8zM9.500 9V6.500h4V9" fill="#333" fillOpacity=".7" /></g>,
];
const controlGaps = [0, 6, 3, 6, 4, 5, 5, 5, 5, 5, 5, 5, 5, 5];

const S = '#5e5e5e';
const hi = '#9c9c9c';
const statusIcons: React.ReactNode[] = [
  <g key="a"><path d="M1 2h4l3 2 3-2h5v2l-4 4v6H8V9L4 8 1 6z" fill={S} /><path d="M2.500 4h2" stroke={hi} /><path d="M13 8v7" stroke={hi} strokeDasharray="1.500 2" /></g>,
  <g key="b"><path d="M1 13l6-9 6-3v13H1z" fill={S} /><path d="M14 4v10M2 14h10" stroke={hi} strokeDasharray="1.500 2" /></g>,
  <g key="c"><path d="M1 8h3V1h6v6h3v4l2 4-5-2H1z" fill={S} /><path d="M6 4v2M13 9l2 6" stroke={hi} strokeDasharray="1.500 2" /></g>,
  <g key="d"><path d="M1 3l4-1h8v4l-2 2v6H2z" fill={S} /><path d="M14 3l-1 5 2 6" stroke={hi} strokeDasharray="1.500 2" /></g>,
  <g key="e"><path d="M1 5h6M4 2v6M8 7l5 5M10 13h4V9" stroke={S} strokeWidth="1.500" /><path d="M2 6h6M9 7l5 4" stroke={hi} /></g>,
  <circle key="f" cx="8" cy="8" r="5" stroke={S} strokeWidth="3" strokeDasharray="2.500 1.400" />,
];

/* ---------- taskbar icons ---------- */
const svg24 = (children: React.ReactNode) => <svg width="24" height="24" viewBox="0 0 24 24" fill="none">{children}</svg>;
const Camtasia = ({ dot = false }) => svg24(
  <>
    <path d="M1 8L15 2l8 13-13 7z" fill="#202020" stroke="#9a9a9a" strokeWidth="1.600" strokeLinejoin="round" />
    <path d="M9 8h6v9H9z" fill="#3e4f2a" /><path d="M11 9h2v4h-2z" fill="#7f8f6a" />
    {dot && <><circle cx="18" cy="18" r="5" fill="#a02222" /><path d="M15 18h6" stroke="#c79a9a" strokeWidth="1.500" /></>}
  </>
);
const tasks: { icon: React.ReactNode; run?: boolean; active?: boolean }[] = [
  { icon: <Ico w={17} h={16} vb="0 0 20 18" c="#a0a0a0" sw={1.500}><path d="M2 1v2h11V1M2 5.500h11v7H2zM2 17v-2h11v2M17.500 1v5M17.500 11v6" /><path d="M16.500 7.500h2v2h-2z" fill="#a0a0a0" /></Ico> },
  { icon: svg24(<path d="M2 12C3 3 9 1 13 1c7 0 9 5 9 9v3H8c0 4 3 6 7 6 3 0 5-1 6-2v5c-2 1-4 1-7 1-7 0-11-4-11-9 0-3 2-6 5-7-1 1-2 2-1.500 3H16c0-3-1-4-4-4-4 0-8 2-10 6z" fill="#00559c" />) },
  { icon: svg24(<><path d="M1 3h9l2 2h11v16H1z" fill="#b68d33" /><path d="M1 3h9v3H1z" fill="#a06a08" /><path d="M5 21v-8h14v8h-3v-4H8v4z" fill="#2e74a3" /></>), run: true },
  { icon: svg24(<><path d="M8 6c0-6 8-6 8 0" stroke="#8a8a8a" strokeWidth="1.500" /><path d="M1 6h22v15l-2 1.500H2L1 21z" fill="#b5b5b5" /><path d="M6.500 9h5v5h-5z" fill="#a83a1c" /><path d="M12.500 9h5v5h-5z" fill="#5c8a10" /><path d="M6.500 15h5v5h-5z" fill="#0b78a5" /><path d="M12.500 15h5v5h-5z" fill="#b58508" /></>) },
  { icon: svg24(<><path d="M0 9l12-8 12 8v14H0z" fill="#095a8e" /><path d="M3 9h18l-9 9z" fill="#aebac2" /><path d="M0 10l12 9 12-9v13H0z" fill="#1a82b4" /></>) },
  { icon: svg24(<><circle cx="12" cy="12" r="11" fill="#b28b1b" /><path d="M2.500 6.500A11 11 0 0 1 21.500 6.500H12a5.500 5.500 0 0 0-5 4z" fill="#a83a30" /><path d="M2.500 6.500A11 11 0 0 0 11 23l5-8a5 5 0 0 1-9-1z" fill="#277a40" /><circle cx="12" cy="12" r="5" fill="#b5b5b5" /><circle cx="12" cy="12" r="4" fill="#2c62a8" /></>), run: true },
  { icon: svg24(<><path d="M7 2l13 1-1 18-17-5z" fill="#5f8c94" /><path d="M8 2l10 1-4 15-12-2z" fill="#86a9ad" /><path d="M20 3l2 1-2 17-3 0z" fill="#35494c" /></>) },
  { icon: svg24(<><path d="M3 0h18v24H3z" fill="#a8a8a8" /><path d="M5 2h14v4H5z" fill="#1c1c1c" /><path d="M5.500 10h3m2 0h3m2 0h3M5.500 14h3m2 0h3m2 0h3M5.500 18h3m2 0h3m2 0h3M5.500 21.500h3m2 0h3m2 0h3" stroke="#1c1c1c" strokeWidth="2" /></>) },
  { icon: svg24(<><path d="M1 17C-1 6 12 2 20 6c4 5 2 9-2 10-3 0-2 6-7 7-5 0-9-3-10-6z" fill="#7e9dac" /><circle cx="6" cy="12" r="2" fill="#9c3b2a" /><circle cx="11" cy="9" r="2" fill="#b0902c" /><circle cx="8" cy="17" r="2" fill="#3b7d42" /><path d="M20 1l-5 17" stroke="#9b6b35" strokeWidth="3" /></>) },
  { icon: svg24(<><circle cx="12" cy="12" r="11" fill="#b7841d" /><path d="M12 1a11 11 0 0 1 11 13c-1 3-3 1-4-2 0-5-3-8-7-11z" fill="#53268c" /><path d="M3 6c4-6 13-6 17-1-6-2-12-1-15 4z" fill="#a2501c" /><circle cx="12" cy="12" r="7" fill="#b2b2b8" /><path d="M12 8a2.200 2.200 0 0 1 1 4v4h-2v-4a2.200 2.200 0 0 1 1-4z" fill="#3c2560" /></>) },
  { icon: svg24(<path fillRule="evenodd" d="M17 0l6 3v18l-6 3-9-9-5 4-2-1V6l2-1 5 4zM17 7l-5 5 5 5zM3 9v6l3-3z" fill="#5f3391" />) },
  { icon: svg24(<><path fillRule="evenodd" d="M17 0l6 3v18l-6 3L7 15l-4 3-2-1 4-5-4-5 2-1 4 3zM17 7l-6 5 6 5z" fill="#0b5d96" /><path d="M17 0l6 3v18l-6 3z" fill="#1d74ad" /></>) },
  { icon: <svg width="24" height="24" viewBox="0 0 24 24"><path d="M0 0h24v24H0z" fill="#97a3b2" /><path fillRule="evenodd" d="M6 3h7c6 0 7 8 2 10l4 8h-5l-3-7v7H6zM11 6v5h2c3 0 3-5 0-5z" fill="#1a4a7c" /></svg>, run: true, active: true },
  { icon: <Camtasia />, run: true },
  { icon: <Camtasia dot />, run: true },
];
const TC = '#a8a8a8';

const lines = ['Se crearon los siguientes Clash Parameters:', '', 'Clash', 'Clash Category', 'Clash Comments', 'Clash Grid Location', 'Clash Solved', 'Done', 'ID Element', 'Percent Done', 'Zone'];

export default function App() {
  return (
    <>
      <Global />
      <Screen>
        <TopStrip>
          <StripPart $w={286} />
          <StripPart $w={299} $bg="#212121">
            <Ico w={299} h={7} vb="0 0 299 7" c="#8a8a8a"><path d="M275 0c2 3 11 3 13 0" /></Ico>
          </StripPart>
          <StripMark $w={40} />
          <StripPart $w={107} $bg="#212121" />
          <StripMark $w={40} />
          <StripPart $w={152} $bg="#212121" />
          <StripMark $w={48} $lit />
          <StripPart $w={681} $bg="#212121" />
        </TopStrip>
        <TitleBar>
          <QuickAccess />
          <WindowTitle>Autodesk Revit 2019 - STUDENT VERSION - rme_mep_desdecero.rvt - 3D View: COORD</WindowTitle>
          <RightBar />
        </TitleBar>
        <Tabs>
          {tabs.map(t => <Tab key={t.t} $w={t.w} $kind={t.kind}>{t.t}</Tab>)}
          <Slot $ml={22} $w={15}><Ico w={15} h={9} vb="0 0 15 9" c="#4a4d55"><rect x=".6" y=".6" width="13.800" height="7.800" rx="2" /><path d="M6 5.500L7.500 3 9 5.500z" fill="#333" /></Ico></Slot>
          <Slot $ml={4} $w={6}><Down /></Slot>
        </Tabs>
        <Ribbon>
          <RibbonPanel $w={216} $line>
            <Commands>{commands1.map(c => <Command key={c[0]} $w={c[2]}>{ribbonIcons[c[0]]}{c[1]}</Command>)}</Commands>
            <PanelTitle>Clash Manage</PanelTitle>
          </RibbonPanel>
          <RibbonPanel $w={238}>
            <Commands>{commands2.map(c => <Command key={c[0]} $w={c[2]}>{ribbonIcons[c[0]]}{c[1]}</Command>)}</Commands>
            <PanelTitle>Clash Review</PanelTitle>
          </RibbonPanel>
        </Ribbon>
        <ContextBar>Modify | Ducts</ContextBar>

        <Main>
          <Side>
            <SideBody>
              <SideTitle>Properties</SideTitle>
              <TypeSelector>
                <Thumb>
                  <svg width="63" height="63" viewBox="0 0 63 63"><path d="M0 17L21 4l42 25-20 12z" fill="#484848" /><path d="M0 17l43 25v16L0 34z" fill="#525252" /><path d="M43 42l20-13v17L43 58z" fill="#2a2a2a" /><path d="M0 17l43 25" stroke="#2c2c2c" fill="none" /></svg>
                </Thumb>
                <TypeNames>Rectangular Duct<br />Mitered Elbows / Taps</TypeNames>
                <Down w={7} />
              </TypeSelector>
              <FilterRow>
                <FilterCombo>Ducts (1)<Chevron c="#555" /></FilterCombo>
                <EditType>
                  <Ico w={17} h={17} vb="0 0 17 17" c="#3b4450"><path d="M1 3l2-2h4v7H1zM9 3l1-2h5v7M1 10h6v6H1zM7 8h2V2" /><path d="M9 7h7v9H9z" fill="#8a96a5" /><path d="M10.500 9h4M10.500 12h1M13.500 12h1M10.500 14h1M13.500 14h1" stroke="#1d4f86" /></Ico>
                  Edit Type
                </EditType>
              </FilterRow>
              <GridArea>
                <PropGrid>
                  {groups.map(g => (
                    <React.Fragment key={g.name}>
                      <Group>{g.name}<Collapse /></Group>
                      {g.rows.map(r => (
                        <PropRow key={r[0]} $dim={r[2]}>
                          <PropName>{r[0]}</PropName>
                          <PropValue $focus={r[1] === 'Center'}>{r[1]}</PropValue>
                        </PropRow>
                      ))}
                    </React.Fragment>
                  ))}
                </PropGrid>
                <SideScroll>
                  <ArrowBox $h={17}><Chevron up w={8} sw={1.600} /></ArrowBox>
                  <SideScrollThumb />
                  <ArrowBox $h={17} $mt={166}><Chevron w={8} sw={1.800} /></ArrowBox>
                </SideScroll>
              </GridArea>
              <SideFooter><HelpLink>Properties help</HelpLink><ApplyButton>Apply</ApplyButton></SideFooter>
            </SideBody>
            <SideTabs>
              <SideTab $w={230}>Project Browser - rme_mep_desdecero.rvt</SideTab>
              <SideTab $w={66} $active>Properties</SideTab>
            </SideTabs>
          </Side>

          <View>
            <ViewTabs>
              <ViewTab $w={128}><House c="#585858" /><span>{'{3D}'}</span></ViewTab>
              <ViewTab $w={128} $active><House c="#2e3338" fill="#8b9299" /><span>COORD</span><Cross w={10} /></ViewTab>
              <TabMenu><Ico w={9} h={8} vb="0 0 9 8" c="#222"><path d="M1.500 1h6" /><path d="M1.500 3.500h6l-3 3z" fill="#222" /></Ico></TabMenu>
            </ViewTabs>
            <ViewBody>
              <Canvas>
                <Placed $x={79} $y={119}>
                  <svg width="16" height="22" viewBox="0 0 16 22"><path d="M1 1v15l3.500-3 2.500 6 3-1.200L7.500 12H12z" fill="#a2a2a2" stroke="#3c3c3c" strokeWidth="1.500" /></svg>
                </Placed>
                <Placed $x={704} $y={500}><Building /></Placed>
                <Placed $x={1200.5} $y={53}><ViewCube /></Placed>
                <NavBar>
                  <Slot $ml={19} $w={8}><Ico w={7} h={7} vb="0 0 8 8" c="#666" sw={1.600}><circle cx="4" cy="4" r="3" /></Ico></Slot>
                  <ArrowBox $h={40}><Ico w={23} h={23} vb="0 0 23 23" c="#666b72" sw={1.600}><path d="M12 1h10v11a10.500 10.500 0 1 1-10-11z" fill="#949699" /><circle cx="11.500" cy="11.500" r="6" fill="#a2a2a2" /><path d="M7 16l-3 3M16 16l3 3" /></Ico></ArrowBox>
                  <ArrowBox $h={5}><Down c="#555" /></ArrowBox>
                  <ArrowBox $h={8}><NavLine /></ArrowBox>
                  <ArrowBox $h={29}><Ico w={17} h={17} vb="0 0 17 17" c="#60676a" sw={1.400}><path d="M1 1h10v11H1z" fill="#6d8b62" stroke="#66825c" /><circle cx="11.500" cy="11.500" r="3" fill="#a2a2a2" /><path d="M14 14l2.500 2.500" strokeWidth="2" /></Ico></ArrowBox>
                  <ArrowBox $h={8}><Down c="#555" /></ArrowBox>
                  <ArrowBox $h={23}><Slot $ml={19} $w={8}><Ico w={7} h={7} vb="0 0 8 8" c="#666" sw={1.400}><circle cx="4" cy="4" r="3" /><path d="M3.500 4h1" strokeWidth="1" /></Ico></Slot></ArrowBox>
                </NavBar>
              </Canvas>
              <VScroll>
                <ArrowBox $h={19}><Chevron up w={9} sw={2} /></ArrowBox>
                <VThumb />
                <ArrowBox $h={16} $mt={501}><Chevron w={8} sw={2.200} /></ArrowBox>
              </VScroll>
            </ViewBody>
            <ViewControls>
              <Scale>1 : 100</Scale>
              {controlIcons.map((ic, i) => (
                <Slot key={i} $ml={i ? controlGaps[i] : 3} $w={16}><Ico>{ic}</Ico></Slot>
              ))}
              <Slot $ml={7} $w={10}><Ico w={6} h={9} vb="0 0 6 9" sw={1.800}><path d="M4.500 1L1 4.500 4.500 8" /></Ico></Slot>
              <Sep $ml={3} $h={13} />
              <HThumb />
              <Slot $ml={626} $w={8}><Ico w={6} h={9} vb="0 0 6 9" sw={2.200}><path d="M1 1l3.500 3.500L1 8" /></Ico></Slot>
              <Slot $ml={11} $w={10}><Ico w={9} h={9} vb="0 0 9 9" c="#777" sw={1.600}><path d="M8 2v.1M8 5v.1M8 8v.1M5 5v.1M5 8v.1M2 8v.1" /></Ico></Slot>
            </ViewControls>
          </View>
        </Main>

        <StatusBar>
          <StatusText $w={901}>Ready</StatusText>
          <Slot $w={18}><Ico w={17} c={S} sw={2}><path d="M1 6l4-2 3 3M3 6v8M7 8v6M12 6v8M9 3l3-2 3 2-3 4z" /></Ico></Slot>
          <Combo $w={204} $ml={8}><span /><Chevron c="#707070" /></Combo>
          <Slot $ml={8} $w={14}><Ico w={14} c={S} sw={1.800}><path d="M5 2h9v4l-6 2-4 6-2-1 4-8z" /></Ico></Slot>
          <StatusText $ml={6} $w={12}>:0</StatusText>
          <Slot $ml={20} $w={16}><Ico c="#606060"><path d="M1 1h14v14H1z" fill="#606060" /></Ico></Slot>
          <Slot $ml={11} $w={16}><Ico c="#606060" sw={1.500}><path d="M1 8h8l-3-3M9 8l-3 3" stroke="#999" /><path d="M4 1h11v13H4V11l4 1V5L4 4z" fill="#606060" /></Ico></Slot>
          <Combo $w={204} $ml={9}>Main Model<Chevron c="#707070" /></Combo>
          {statusIcons.map((ic, i) => (
            <Slot key={i} $ml={i ? 10 : 228} $w={16}><Ico c="none">{ic}</Ico></Slot>
          ))}
          <Slot $ml={8} $w={16}><Ico c="#30363f"><path d="M1 2h14L10 8v6l-4 1V8z" fill="#8089a0" /></Ico></Slot>
          <StatusText $w={20}>:1</StatusText>
        </StatusBar>

        <Taskbar>
          <StartButton><svg width="18" height="17" viewBox="0 0 18 17"><path d="M0 2.500l7-1v6.500H0zM8 1.300L18 0v8H8zM0 9h7v6.500l-7-1zM8 9h10v8L8 15.700z" fill="#a9a9a9" /></svg></StartButton>
          <TaskSearch>
            <Ico w={17} h={17} vb="0 0 17 17" c="#333" sw={1.500}><circle cx="10.500" cy="6" r="5" /><path d="M7 10L1 16" /></Ico>
            Escribe aquí para buscar
          </TaskSearch>
          {tasks.map((t, i) => <TaskItem key={i} $run={t.run} $active={t.active}>{t.icon}</TaskItem>)}
          <Tray>
            <Ico w={12} h={8} vb="0 0 12 8" c={TC}><path d="M1 7l5-6 5 6" /></Ico>
            <Slot $ml={9} $w={17}><Ico w={17} h={12} vb="0 0 17 12" c={TC}><path d="M5 3h10v8H5z" /><path d="M7 5h7v4H7z" fill={TC} /><path d="M16.500 5.500v3M1 2h4v3H1zM3 5v5" /></Ico></Slot>
            <Slot $ml={7} $w={17}><Ico w={17} h={14} vb="0 0 17 14" c={TC}><path d="M1 5h2l4-4v12L3 9H1zM9.500 5c1 1 1 3 0 4M12 3c2 2 2 6 0 8M14.500 1c3 3 3 9 0 12" /></Ico></Slot>
            <Slot $ml={11} $w={17}><Ico w={17} c={TC}><path d="M7 10L11 1c3-1 3 1 2 3L9 12c-3 4-8 4-7 1s4-3 6-1 5 0 7-5" /></Ico></Slot>
            <Slot $ml={11} $w={24}><Ico w={23} h={13} vb="0 0 23 13" c={TC}><path d="M1 1h21v11H1z" /><path d="M4 4h.5M7 4h.5M10 4h.5M13 4h.5M16 4h.5M19 4h.5M4 6.500h.5M7 6.500h.5M10 6.500h.5M13 6.500h.5M16 6.500h.5M19 6.500h.5M4 9.500h1M8 9.500h7M18 9.500h1" /></Ico></Slot>
            <TrayText $ml={10} $w={26}>ESP</TrayText>
            <TrayText $ml={8} $w={64}>20:44<br />19-04-2020</TrayText>
            <Slot $ml={12} $w={24}>
              <svg width="24" height="26" viewBox="0 0 24 26"><path d="M0 4h16v14H6l-3 3v-3H0z" fill="#b0b0b0" /><path d="M3 8h10M3 11h10M3 14h7" stroke="#222" strokeWidth="1.200" /><circle cx="16" cy="18" r="7.500" fill="#2c2c2c" stroke="#666" /><text x="13" y="22" fontSize="10" fill="#b0b0b0" fontFamily="Open Sans, sans-serif">3</text></svg>
            </Slot>
          </Tray>
        </Taskbar>

        <Halo><HaloShade /></Halo>
        <Dialog>
          <DialogTitle>Quick Clash Detection Tool - Creation CLASH Parameters<Ico w={11} h={11} vb="0 0 11 11" c="#111" sw={1.100}><path d="M.5.5l10 10M10.500.5l-10 10" /></Ico></DialogTitle>
          <DialogBody>{lines.map((l, i) => <BodyLine key={i}>{l}</BodyLine>)}</DialogBody>
          <DialogFooter><CloseButton>Cerrar</CloseButton></DialogFooter>
        </Dialog>
        <Marker width="520" height="460" viewBox="0 0 1560 1380" fill="none" stroke="#fe0000" strokeWidth="15" strokeLinecap="round">
          <path d="M46 44C70 260 66 600 68 900L72 1340" />
          <path d="M1500 38C1502 300 1500 860 1459 1228" />
          <path d="M41 1312C300 1282 500 1294 900 1305C1150 1313 1350 1300 1452 1283" />
        </Marker>
      </Screen>
    </>
  );
}
